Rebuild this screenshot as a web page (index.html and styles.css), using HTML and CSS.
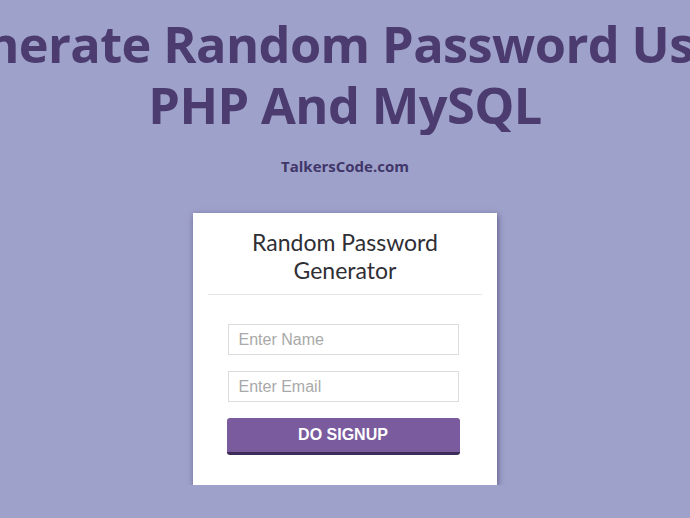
FILE: index.html
```html
<!DOCTYPE html>
<html lang="en">
<head>
    <meta charset="UTF-8">
    <meta name="viewport" content="width=device-width, initial-scale=1.0">
    <title>Generate Random Password Using PHP And MySQL</title>
    <link rel="stylesheet" href="styles.css">
</head>
<body>
    <div class="hero">
        <h1>Generate Random Password Using<br>PHP And MySQL</h1>
    </div>
    <p class="site">TalkersCode.com</p>

    <div class="card">
        <h2>Random Password<br>Generator</h2>
        <form class="signup" onsubmit="return false;">
            <input type="text" placeholder="Enter Name">
            <input type="text" placeholder="Enter Email">
            <button type="submit">DO SIGNUP</button>
        </form>
    </div>
</body>
</html>
```

FILE: styles.css
```css
/* page */
body {
    margin: 0;
    background: #9ea1c9;
    font-family: "Open Sans", sans-serif;
}

/* big heading, first line runs off both edges */
.hero {
    display: flex;
    justify-content: center;
    overflow: hidden;
    padding-top: 13px;
}

.hero h1 {
    margin: 0;
    white-space: nowrap;
    text-align: center;
    font-size: 50.5px;
    line-height: 61px;
    font-weight: 700;
    color: #4b3b6f;
    letter-spacing: -0.6px;
}

.site {
    margin: 21px 0 0;
    text-align: center;
    font-size: 15px;
    font-weight: 700;
    color: #41366a;
}

/* form box */
.card {
    width: 274px;
    margin: 37px auto 0;
    padding: 15px 15px 30px;
    background: #ffffff;
    box-shadow: 1px 2px 6px rgba(40, 30, 80, 0.55);
}

.card h2 {
    margin: 0;
    padding-bottom: 10px;
    border-bottom: 1px solid #e6e6e6;
    text-align: center;
    font-family: Lato, sans-serif;
    font-size: 23px;
    line-height: 28px;
    font-weight: 400;
    color: #2f2f35;
}

.signup {
    display: flex;
    flex-direction: column;
    align-items: center;
    gap: 16px;
    margin-top: 29px;
    padding-right: 4px;
}

.signup input {
    box-sizing: border-box;
    width: 231px;
    height: 31px;
    padding: 0 10px;
    border: 1px solid #dcdcdc;
    font-family: "Liberation Sans", Arial, sans-serif;
    font-size: 16px;
    color: #555555;
}

.signup input::placeholder {
    color: #a9a9a9;
}

.signup button {
    box-sizing: border-box;
    width: 233px;
    height: 37px;
    border: none;
    border-bottom: 3px solid #3d2c57;
    border-radius: 3px;
    background: #7a5c9e;
    color: #ffffff;
    font-family: "Liberation Sans", Arial, sans-serif;
    font-size: 16px;
    font-weight: 700;
    cursor: pointer;
}
```
